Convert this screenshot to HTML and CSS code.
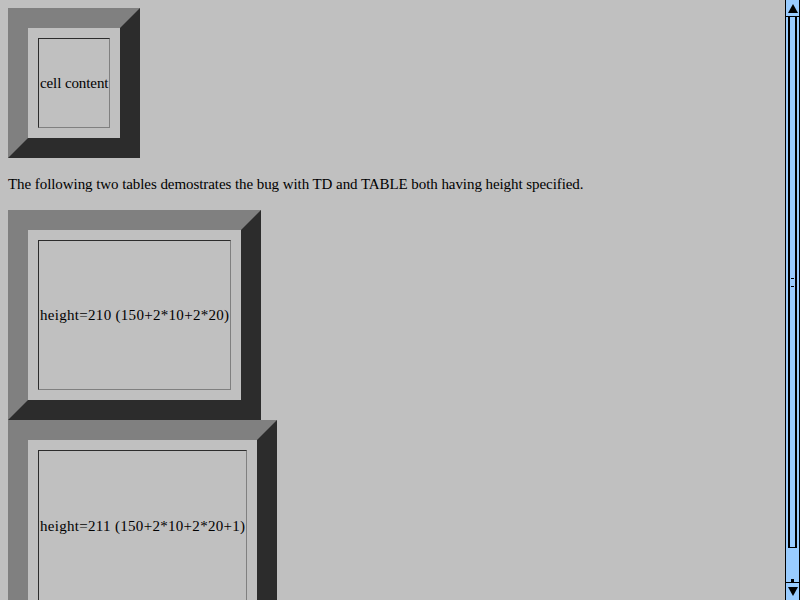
FILE: index.html
```html
<!DOCTYPE html>
<html>
<head>
<meta charset="utf-8">
<link rel="stylesheet" href="styles.css">
</head>
<body>
<div class="page">
  <table class="bevel h150">
    <tr><td class="cell tight">cell content</td></tr>
  </table>
  <p class="note">The following two tables demostrates the bug with TD and TABLE both having height specified.</p>
  <table class="bevel h210">
    <tr><td class="cell wide">height=210 (150+2*10+2*20)</td></tr>
  </table>
  <table class="bevel h211">
    <tr><td class="cell wide">height=211 (150+2*10+2*20+1)</td></tr>
  </table>
</div>
<div class="scrollbar">
  <div class="sb-btn"><span class="tri-up"></span></div>
  <div class="sb-track">
    <div class="sb-thumb">
      <div class="grip"></div>
    </div>
    <div class="sb-rest"><span class="notch"></span></div>
  </div>
  <div class="sb-btn down"><span class="tri-down"></span></div>
</div>
</body>
</html>
```

FILE: styles.css
```css
html, body {
  margin: 0;
  padding: 0;
  background: #c0c0c0;
}
body {
  display: flex;
  height: 600px;
  overflow: hidden;
  font-family: "Liberation Serif", "Times New Roman", serif;
  font-size: 15px;
  color: #000;
}
.page {
  flex: 1;
  padding: 8px;
  overflow: hidden;
}
.bevel {
  border-collapse: separate;
  border-spacing: 10px;
  border-width: 20px;
  border-style: solid;
  border-color: #808080 #2c2c2c #2c2c2c #808080;
}
.h150 { height: 150px; }
.h210 { height: 210px; }
.h211 { height: 211px; }
.cell {
  padding: 1px;
  border: 1px solid;
  border-color: #2c2c2c #808080 #808080 #2c2c2c;
  vertical-align: middle;
  white-space: nowrap;
  line-height: 20px;
}
.tight { letter-spacing: -0.1px; }
.wide { letter-spacing: 0.3px; }
.note {
  margin: 16px 0;
  line-height: 20px;
  letter-spacing: -0.07px;
}
.scrollbar {
  width: 15px;
  height: 600px;
  display: flex;
  flex-direction: column;
  background: #99ccff;
  border-left: 1px solid #000;
  border-right: 1px solid #000;
  box-sizing: border-box;
  flex: none;
}
.sb-btn {
  height: 16px;
  border-bottom: 1px solid #000;
  display: flex;
  align-items: center;
  justify-content: center;
  flex: none;
}
.sb-btn.down {
  height: 17px;
  border-bottom: none;
  border-top: 1px solid #000;
}
.tri-up {
  width: 0; height: 0;
  border-left: 5px solid transparent;
  border-right: 5px solid transparent;
  border-bottom: 9px solid #000;
}
.tri-down {
  width: 0; height: 0;
  border-left: 5px solid transparent;
  border-right: 5px solid transparent;
  border-top: 9px solid #000;
}
.sb-track {
  flex: 1;
  display: flex;
  flex-direction: column;
}
.sb-thumb {
  height: 530px;
  margin: 0 2px;
  border-left: 2px solid #000;
  border-right: 2px solid #000;
  border-bottom: 1px solid #000;
  display: flex;
  align-items: center;
  justify-content: center;
  flex: none;
}
.grip {
  width: 3px;
  height: 7px;
  border-top: 1px solid #000;
  border-bottom: 1px solid #000;
}
.sb-rest {
  flex: 1;
  display: flex;
  align-items: flex-end;
  justify-content: center;
}
.notch {
  width: 3px;
  height: 3px;
  background: #000;
}
```
